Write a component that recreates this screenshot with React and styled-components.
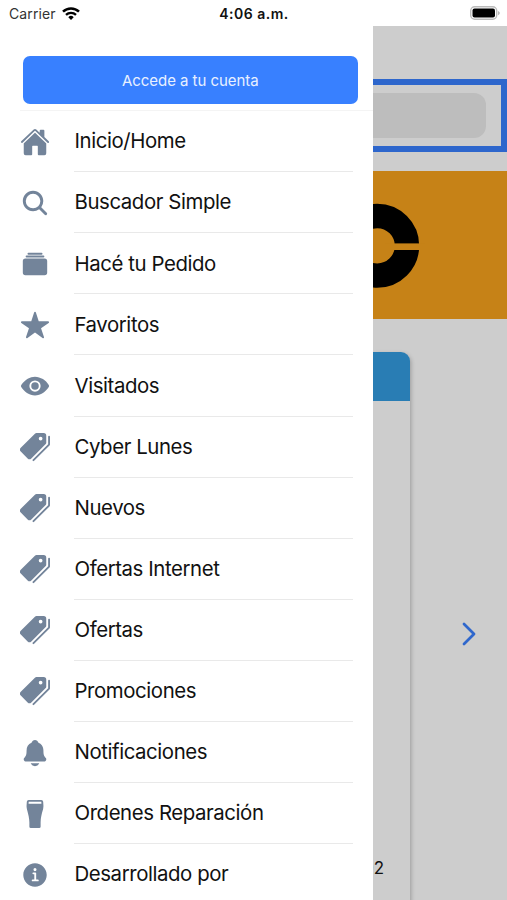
import React from "react";
import styled, { createGlobalStyle } from "styled-components";
import {
  IoHome,
  IoSearch,
  IoAlbums,
  IoStar,
  IoEye,
  IoPricetags,
  IoNotifications,
  IoPint,
  IoInformationCircle,
} from "react-icons/io5";

const GlobalStyle = createGlobalStyle`
  * {
    box-sizing: border-box;
  }

  body {
    margin: 0;
    background-color: #fff;
    font-family: Inter, "Liberation Sans", sans-serif;
    overflow: hidden;
  }
`;

const Screen = styled.div`
  display: flex;
  flex-direction: column;
  width: 507px;
  height: 900px;
  overflow: hidden;
`;

const StatusBar = styled.header`
  display: grid;
  grid-template-columns: 1fr auto 1fr;
  align-items: center;
  height: 25.6px;
  flex-shrink: 0;
  padding: 1px 7px 0 9px;
  color: #111;
`;

const Carrier = styled.div`
  display: flex;
  align-items: center;
  gap: 6px;
  font-size: 14px;
  letter-spacing: 0.1px;
  color: #333;
`;

const Clock = styled.div`
  margin-right: 1px;
  font-size: 14px;
  font-weight: 600;
  letter-spacing: 0.5px;
`;

const Battery = styled.svg`
  justify-self: end;
`;

const Body = styled.div`
  display: flex;
  flex: 1;
  min-height: 0;
`;

const Drawer = styled.aside`
  display: flex;
  flex-direction: column;
  width: 372.6px;
  flex-shrink: 0;
  padding: 30.4px 0 0 20px;
  background-color: #fff;
`;

const LoginButton = styled.button`
  height: 48px;
  flex-shrink: 0;
  margin: 0 15px 6.1px 3px;
  padding: 1px 0 0;
  border: none;
  border-radius: 7px;
  background-color: #3880ff;
  color: #e8f0ff;
  font-family: inherit;
  font-size: 15px;
  letter-spacing: -0.05px;
`;

const MenuList = styled.ul`
  flex-shrink: 0;
  margin: 0;
  padding: 0;
  border-top: 1px solid #f4f4f4;
  list-style: none;
`;

const MenuItem = styled.li`
  display: flex;
  align-items: center;
  height: 61.1px;

  svg {
    width: 30px;
    height: 30px;
    flex-shrink: 0;
    color: #73849a;
  }
`;

const MenuLabel = styled.span`
  display: flex;
  align-items: center;
  width: 279px;
  height: 100%;
  margin-left: 24px;
  padding: 0 0 0.6px 0.5px;
  border-bottom: 1px solid #e9e9e9;
  color: #111;
  font-size: 20.4px;
  letter-spacing: -0.42px;
  white-space: nowrap;
`;

const Page = styled.main`
  flex: 1;
  min-width: 0;
  overflow: hidden;
  background-color: #cdcdcd;
`;

const SearchBar = styled.div`
  height: 73px;
  margin-top: 53.4px;
  padding: 8px 15px 8px 0;
  border: 6px solid #2d66cc;
  border-left: none;
`;

const SearchInput = styled.div`
  height: 45px;
  border-radius: 0 12px 12px 0;
  background-color: #bdbdbd;
`;

const Banner = styled.div`
  height: 148.6px;
  margin-top: 18.8px;
  background-color: #c68217;

  svg {
    display: block;
  }
`;

const Slide = styled.section`
  display: flex;
  align-items: flex-start;
  margin-top: 32.6px;
`;

const Card = styled.div`
  display: flex;
  flex-direction: column;
  width: 37.4px;
  height: 600px;
  border-radius: 0 9px 0 0;
  box-shadow: 1px 2px 4px rgba(0, 0, 0, 0.25);
`;

const CardHeader = styled.div`
  height: 49px;
  border-radius: 0 9px 0 0;
  background-color: #297db4;
`;

const Price = styled.div`
  margin: 456px 0 0 -9.5px;
  color: #111;
  font-size: 17px;
  line-height: 22px;
`;

const NextArrow = styled.svg`
  margin: 269px 0 0 51px;
`;

const items = [
  { icon: IoHome, label: "Inicio/Home" },
  { icon: IoSearch, label: "Buscador Simple" },
  { icon: IoAlbums, label: "Hacé tu Pedido" },
  { icon: IoStar, label: "Favoritos" },
  { icon: IoEye, label: "Visitados" },
  { icon: IoPricetags, label: "Cyber Lunes" },
  { icon: IoPricetags, label: "Nuevos" },
  { icon: IoPricetags, label: "Ofertas Internet" },
  { icon: IoPricetags, label: "Ofertas" },
  { icon: IoPricetags, label: "Promociones" },
  { icon: IoNotifications, label: "Notificaciones" },
  { icon: IoPint, label: "Ordenes Reparación" },
  { icon: IoInformationCircle, label: "Desarrollado por" },
];

const WifiIcon = () => (
  <svg width="18" height="13" viewBox="0 0 18 13" fill="none">
    <path d="M1 4.7a11.4 11.4 0 0 1 16 0" stroke="#000" strokeWidth="2.5" />
    <path d="M4 7.9a7.1 7.1 0 0 1 10 0" stroke="#000" strokeWidth="2.3" />
    <path d="M9 13 6.3 10.2a3.8 3.8 0 0 1 5.4 0Z" fill="#000" />
  </svg>
);

const App = () => {
  return (
    <>
      <GlobalStyle />
      <Screen>
        <StatusBar>
          <Carrier>
            Carrier
            <WifiIcon />
          </Carrier>
          <Clock>4:06 a.m.</Clock>
          <Battery width="30" height="14" viewBox="0 0 30 14">
            <rect x="0.7" y="0.7" width="26" height="12.6" rx="4" fill="#fff" stroke="#bbb" strokeWidth="1.4" />
            <rect x="2.5" y="2.5" width="22.5" height="9" rx="2" fill="#000" />
            <path d="M28.2 5v4.2c1.9-.8 1.9-3.4 0-4.2Z" fill="#aaa" />
          </Battery>
        </StatusBar>
        <Body>
          <Drawer>
            <LoginButton>Accede a tu cuenta</LoginButton>
            <MenuList>
              {items.map(({ icon: Icon, label }) => (
                <MenuItem key={label}>
                  <Icon />
                  <MenuLabel>{label}</MenuLabel>
                </MenuItem>
              ))}
            </MenuList>
          </Drawer>
          <Page>
            <SearchBar>
              <SearchInput />
            </SearchBar>
            <Banner>
              <svg width="60" height="148" viewBox="0 0 60 148">
                <circle cx="4.2" cy="74.8" r="29.8" fill="none" stroke="#000" strokeWidth="24.4" />
                <rect x="12" y="72.4" width="40" height="6.6" fill="#c68217" />
              </svg>
            </Banner>
            <Slide>
              <Card>
                <CardHeader />
                <Price>02</Price>
              </Card>
              <NextArrow width="16" height="26" viewBox="0 0 16 26" fill="none">
                <path d="m3 3 10 10L3 23" stroke="#2f67cc" strokeWidth="2.8" strokeLinecap="round" strokeLinejoin="round" />
              </NextArrow>
            </Slide>
          </Page>
        </Body>
      </Screen>
    </>
  );
};

export default App;
